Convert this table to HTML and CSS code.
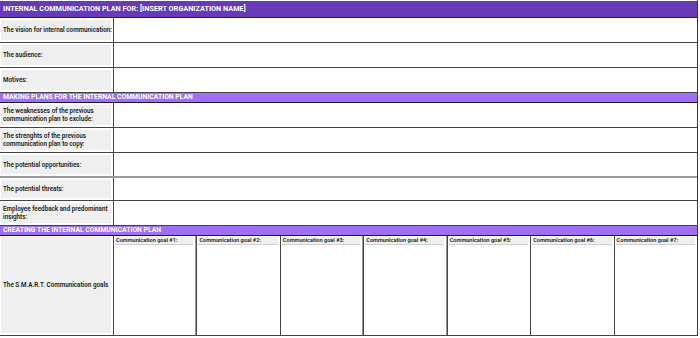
FILE: index.html
```html
<!DOCTYPE html>
<html>
<head>
<meta charset="utf-8">
<link rel="stylesheet" href="styles.css">
</head>
<body>
<div class="sheet">
  <div class="title">INTERNAL COMMUNICATION PLAN FOR: [INSERT ORGANIZATION NAME]</div>
  <div class="row"><div class="label">The vision for internal communication:</div><div class="value"></div></div>
  <div class="row"><div class="label">The audience:</div><div class="value"></div></div>
  <div class="row"><div class="label">Motives:</div><div class="value"></div></div>
  <div class="section">MAKING PLANS FOR THE INTERNAL COMMUNICATION PLAN</div>
  <div class="row"><div class="label">The weaknesses of the previous<br>communication plan to exclude:</div><div class="value"></div></div>
  <div class="row"><div class="label">The strenghts of the previous<br>communication plan to copy:</div><div class="value"></div></div>
  <div class="row gray-bottom"><div class="label">The potential opportunities:</div><div class="value"></div></div>
  <div class="row short"><div class="label">The potential threats:</div><div class="value"></div></div>
  <div class="row"><div class="label">Employee feedback and predominant<br>insights:</div><div class="value"></div></div>
  <div class="section">CREATING THE INTERNAL COMMUNICATION PLAN</div>
  <div class="goals">
    <div class="label tall">The S.M.A.R.T. Communication goals</div>
    <div class="goal gray-right"><div class="goal-head">Communication goal #1:</div></div>
    <div class="goal"><div class="goal-head">Communication goal #2:</div></div>
    <div class="goal gray-right"><div class="goal-head">Communication goal #3:</div></div>
    <div class="goal gray-right"><div class="goal-head">Communication goal #4:</div></div>
    <div class="goal"><div class="goal-head">Communication goal #5:</div></div>
    <div class="goal"><div class="goal-head">Communication goal #6:</div></div>
    <div class="goal last"><div class="goal-head">Communication goal #7:</div></div>
  </div>
</div>
</body>
</html>
```

FILE: styles.css
```css
html, body {
  margin: 0;
  padding: 0;
  background: #ffffff;
}

body {
  font-family: Roboto, "Liberation Sans", Arial, sans-serif;
  color: #111111;
}

.sheet {
  width: 698px;
  border-right: 1px solid #3a3a3a;
  box-sizing: border-box;
  display: flex;
  flex-direction: column;
}

.title {
  height: 16px;
  margin-top: 1px;
  background: #673ab7;
  color: #ffffff;
  font-weight: 700;
  font-size: 7.3px;
  line-height: 16px;
  padding-left: 3px;
  border-bottom: 1px solid #2a1a4a;
}

.row {
  display: grid;
  grid-template-columns: 113px 1fr;
  height: 25px;
  border-bottom: 1px solid #444444;
  box-sizing: border-box;
}

.row.gray-bottom {
  border-bottom: 2px solid #9a9a9a;
}

.row.short {
  height: 23px;
}

.label {
  background: #efefef;
  margin: 2px 2px 2px 1px;
  font-size: 6.3px;
  font-weight: 600;
  line-height: 8px;
  display: flex;
  align-items: center;
  padding-left: 2px;
  padding-right: 0;
  white-space: nowrap;
  color: #1a1a1a;
}

.value {
  border-left: 1px solid #444444;
}

.section {
  height: 10px;
  box-sizing: border-box;
  background: #9f6ff6;
  color: #ffffff;
  font-weight: 700;
  font-size: 6.8px;
  line-height: 9px;
  padding-left: 3px;
  border-bottom: 1px solid #1e1530;
}

.goals {
  display: grid;
  grid-template-columns: 113px repeat(7, 1fr);
  height: 100px;
  border-bottom: 1px solid #444444;
  box-sizing: border-box;
}

.label.tall {
  margin: 1px 2px 2px 1px;
}

.goal {
  border-left: 1px solid #444444;
  display: flex;
  flex-direction: column;
}

.goal.gray-right {
  border-right: 1px solid #9a9a9a;
}

.goal-head {
  background: #efefef;
  margin: 1px 2px 0 1px;
  height: 7px;
  font-size: 5.6px;
  font-weight: 600;
  line-height: 7px;
  padding-left: 1px;
  border-bottom: 1px solid #d0d0d0;
  white-space: nowrap;
  overflow: hidden;
  color: #1a1a1a;
}
```
